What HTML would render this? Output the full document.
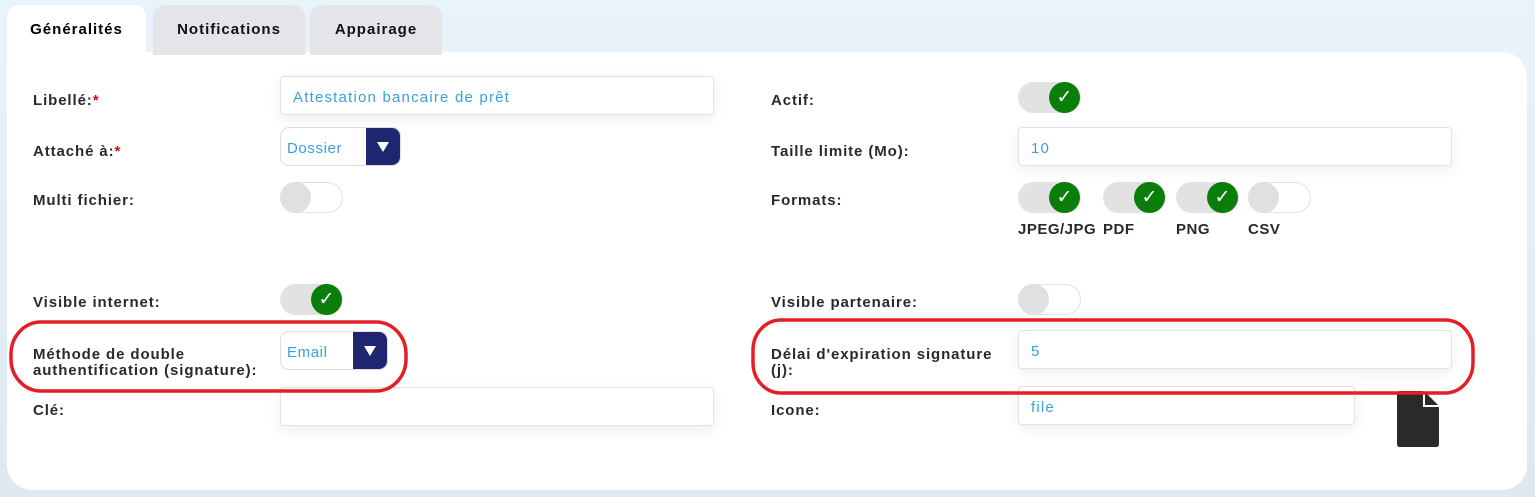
<!DOCTYPE html>
<html><head><meta charset="utf-8"><style>
*{box-sizing:border-box;margin:0;padding:0}
body{width:1535px;height:497px;overflow:hidden;background:linear-gradient(180deg,#e8f3fa,#dde8f0);font-family:"Liberation Sans",sans-serif;position:relative}
.abs{position:absolute}
.tab{position:absolute;top:5px;height:50px;border-radius:12px 12px 0 0;background:#e3e5e9;font-weight:bold;font-size:15px;color:#111;text-align:center;padding-top:16px;letter-spacing:1px}
.card{position:absolute;left:7px;top:52px;width:1520px;height:438px;background:#fff;border-radius:0 25px 25px 25px}
.lbl{position:absolute;font-weight:bold;font-size:15px;color:#2a2a2a;line-height:16px;letter-spacing:0.9px;margin-top:2px}
.lbl i{color:#e00;font-style:normal}
.inp{position:absolute;height:39px;border:1px solid #e2e2e2;border-radius:4px;background:#fff;box-shadow:0 4px 14px rgba(0,0,0,.07);color:#3aa0d8;font-size:15px;padding:12px 12px 0;letter-spacing:1.2px}
.sel{position:absolute;height:39px;border:1px solid #ddd;border-radius:9px;background:#fff;color:#3aa0d8;font-size:15px;padding:12px 6px 0;overflow:hidden;letter-spacing:0.6px}
.sel b{position:absolute;right:0;top:0;width:34px;height:100%;background:#1f2670}
.sel b:after{content:"";position:absolute;left:11px;top:14px;border-left:6px solid transparent;border-right:6px solid transparent;border-top:10px solid #fff}
.tg{position:absolute;width:63px;height:31px;border-radius:16px}
.on{background:#e2e2e2}
.on:after{content:"✓";position:absolute;right:1px;top:0;width:31px;height:31px;border-radius:50%;background:#0a7d0a;color:#fff;font-size:19px;text-align:center;line-height:31px;font-family:"DejaVu Sans",sans-serif}
.off{background:#fff;border:1px solid #e2e2e2}
.off:after{content:"";position:absolute;left:-1px;top:-1px;width:31px;height:31px;border-radius:50%;background:#e0e0e0}
.fl{position:absolute;top:221px;font-weight:bold;font-size:15px;color:#2a2a2a;letter-spacing:0.5px}
</style></head><body>
<div class="card"></div>
<div class="tab" style="left:7px;width:139px;background:#fff;color:#000">Généralités</div>
<div class="tab" style="left:153px;width:152px">Notifications</div>
<div class="tab" style="left:310px;width:132px">Appairage</div>

<div class="lbl" style="left:33px;top:91px">Libellé:<i>*</i></div>
<div class="inp" style="left:280px;top:76px;width:434px">Attestation bancaire de prêt</div>
<div class="lbl" style="left:33px;top:142px">Attaché à:<i>*</i></div>
<div class="sel" style="left:280px;top:127px;width:121px">Dossier<b></b></div>
<div class="lbl" style="left:33px;top:191px">Multi fichier:</div>
<div class="tg off" style="left:280px;top:182px"></div>
<div class="lbl" style="left:33px;top:293px">Visible internet:</div>
<div class="tg on" style="left:280px;top:284px"></div>
<div class="lbl" style="left:33px;top:345px">Méthode de double<br>authentification (signature):</div>
<div class="sel" style="left:280px;top:331px;width:108px">Email<b></b></div>
<div class="lbl" style="left:33px;top:401px">Clé:</div>
<div class="inp" style="left:280px;top:387px;width:434px"></div>

<div class="lbl" style="left:771px;top:91px">Actif:</div>
<div class="tg on" style="left:1018px;top:82px"></div>
<div class="lbl" style="left:771px;top:142px">Taille limite (Mo):</div>
<div class="inp" style="left:1018px;top:127px;width:434px">10</div>
<div class="lbl" style="left:771px;top:191px">Formats:</div>
<div class="tg on" style="left:1018px;top:182px"></div>
<div class="tg on" style="left:1103px;top:182px"></div>
<div class="tg on" style="left:1176px;top:182px"></div>
<div class="tg off" style="left:1248px;top:182px"></div>
<div class="fl" style="left:1018px">JPEG/JPG</div>
<div class="fl" style="left:1103px">PDF</div>
<div class="fl" style="left:1176px">PNG</div>
<div class="fl" style="left:1248px">CSV</div>
<div class="lbl" style="left:771px;top:293px">Visible partenaire:</div>
<div class="tg off" style="left:1018px;top:284px"></div>
<div class="lbl" style="left:771px;top:345px">Délai d'expiration signature<br>(j):</div>
<div class="inp" style="left:1018px;top:330px;width:434px">5</div>
<div class="lbl" style="left:771px;top:401px">Icone:</div>
<div class="inp" style="left:1018px;top:386px;width:337px">file</div>
<svg class="abs" style="left:1397px;top:391px" width="42" height="56" viewBox="0 0 42 56"><path d="M3 0H27L42 15V53Q42 56 39 56H3Q0 56 0 53V3Q0 0 3 0Z" fill="#2a2a2a"/><path d="M27 0V15H42" fill="none" stroke="#fff" stroke-width="2"/></svg>

<svg class="abs" style="left:0;top:0" width="1535" height="497">
<rect x="11" y="322" width="395" height="69" rx="30" ry="32" fill="none" stroke="#e41e26" stroke-width="3.5"/>
<rect x="753" y="320" width="720" height="73" rx="28" ry="30" fill="none" stroke="#e41e26" stroke-width="3.5"/>
</svg>
</body></html>
